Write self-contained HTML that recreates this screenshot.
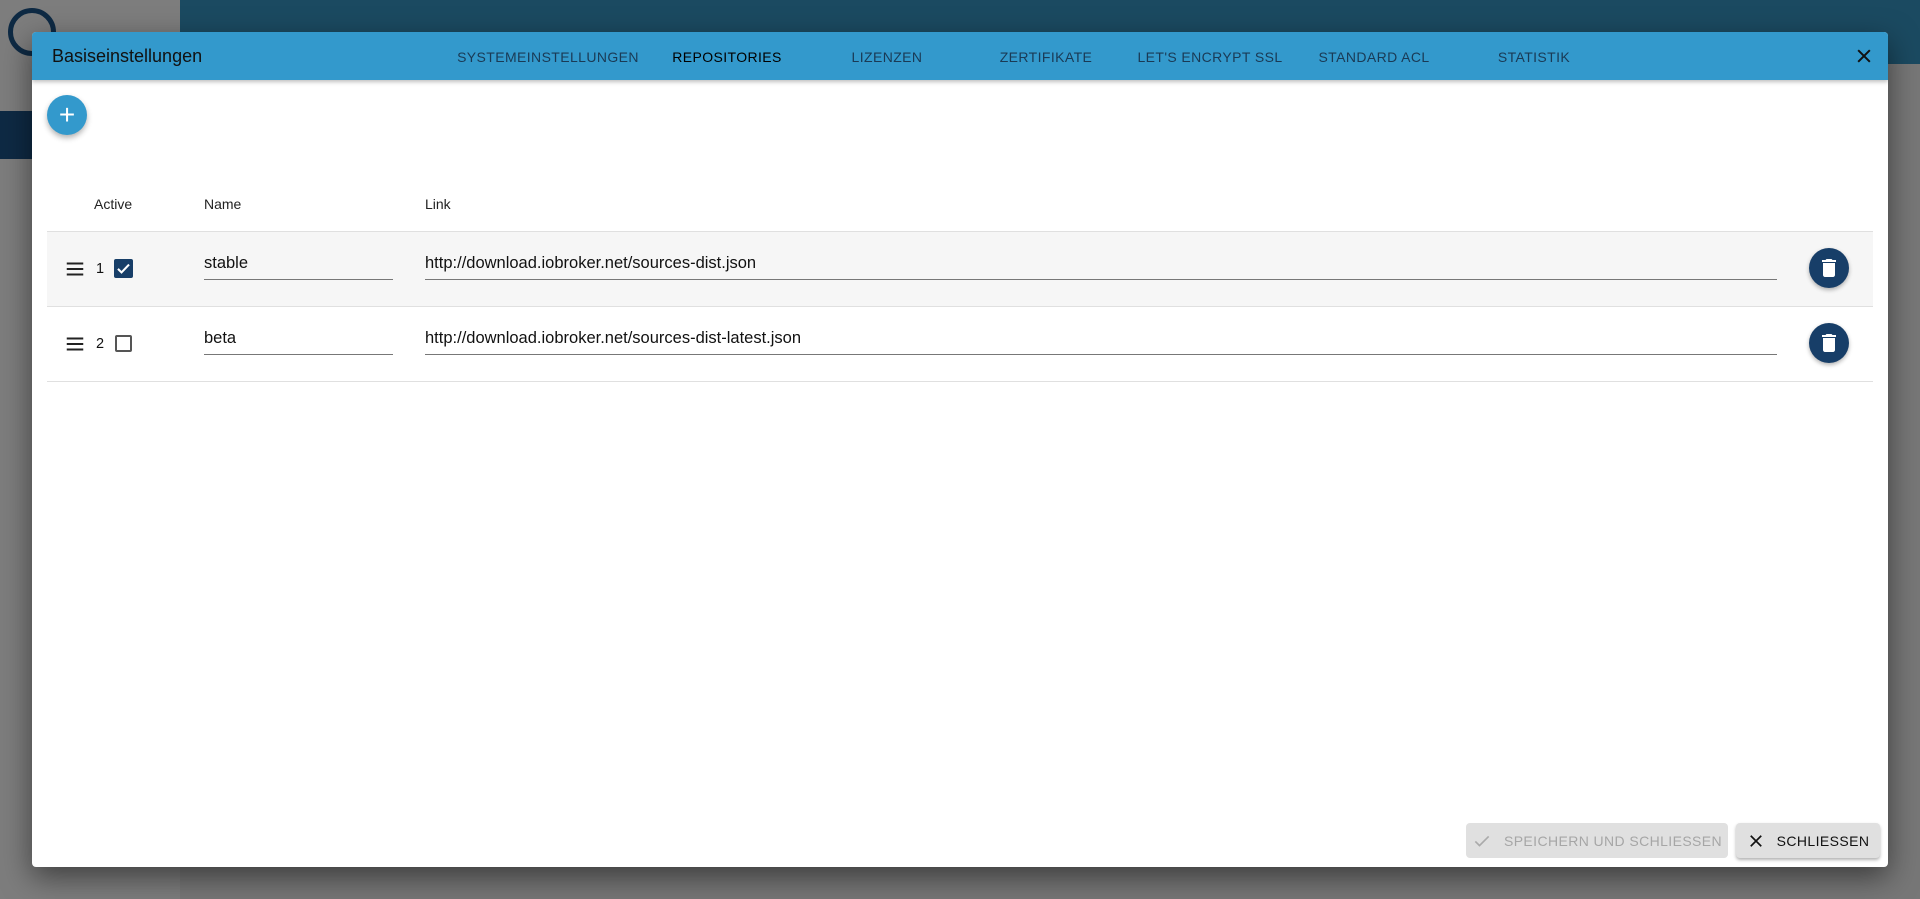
<!DOCTYPE html>
<html><head><meta charset="utf-8"><style>
*{box-sizing:border-box;margin:0;padding:0}
body{width:1920px;height:899px;overflow:hidden;background:#777;font-family:"Liberation Sans",sans-serif;position:relative}
.abs{position:absolute}
.topbar{left:180px;top:0;width:1740px;height:64px;background:#1b4a61}
.side{left:0;top:0;width:180px;height:899px;background:#7d7d7d}
.dlg{left:32px;top:32px;width:1856px;height:835px;background:#fff;border-radius:4px;box-shadow:0 10px 30px rgba(0,0,0,.5);overflow:hidden}
.hdr{left:0;top:0;width:1856px;height:48px;background:#3399cc;box-shadow:0 2px 4px rgba(0,0,0,.25)}
.title{left:20px;top:14px;font-size:18px;color:#111}
.tab{top:17px;font-size:14px;letter-spacing:.4px;color:#1a3a55;transform:translateX(-50%);white-space:nowrap}
.fab{left:15px;top:63px;width:40px;height:40px;border-radius:50%;background:#3399cc;box-shadow:0 3px 6px rgba(0,0,0,.3);color:#fff;font-size:28px;line-height:40px;text-align:center}
.lbl{font-size:14px;color:#222;top:164px}
.row{left:15px;width:1826px;height:75px;border-bottom:1px solid #e0e0e0}
.txt{font-size:16.5px;color:#111}
.ul{height:1px;background:#777}
.del{width:40px;height:40px;border-radius:50%;background:#173e68;box-shadow:0 2px 4px rgba(0,0,0,.3)}
.btn{height:35px;border-radius:4px;font-size:14px;letter-spacing:.4px;display:flex;align-items:center;justify-content:center;gap:12px}
</style></head><body>
<div class="abs side"></div>
<div class="abs" style="left:0;top:111px;width:40px;height:48px;background:#0e2a44"></div>
<div class="abs topbar"></div>
<div class="abs" style="left:8px;top:8px;width:48px;height:48px;border:5px solid #0e2a44;border-radius:50%"></div>
<div class="abs dlg">
 <div class="abs hdr">
  <div class="abs title">Basiseinstellungen</div>
  <div class="abs tab" style="left:516px">SYSTEMEINSTELLUNGEN</div>
  <div class="abs tab" style="left:695px;color:#000">REPOSITORIES</div>
  <div class="abs tab" style="left:855px">LIZENZEN</div>
  <div class="abs tab" style="left:1014px">ZERTIFIKATE</div>
  <div class="abs tab" style="left:1178px">LET'S ENCRYPT SSL</div>
  <div class="abs tab" style="left:1342px">STANDARD ACL</div>
  <div class="abs tab" style="left:1502px">STATISTIK</div>
  <svg class="abs" style="left:1822px;top:14px" width="20" height="20" viewBox="0 0 24 24"><path d="M5 5L19 19M19 5L5 19" stroke="#111" stroke-width="2.4"/></svg>
 </div>
 <div class="abs fab">+</div>
 <div class="abs lbl" style="left:62px">Active</div>
 <div class="abs lbl" style="left:172px">Name</div>
 <div class="abs lbl" style="left:393px">Link</div>
 <div class="abs" style="left:15px;top:199px;width:1826px;height:1px;background:#e0e0e0"></div>
 <div class="abs row" style="top:200px;background:#f6f6f6"></div>
 <div class="abs row" style="top:275px"></div>
 <!-- row1 -->
 <svg class="abs" style="left:32px;top:226px" width="22" height="22" viewBox="0 0 24 24"><path d="M3 6h18M3 12h18M3 18h18" stroke="#222" stroke-width="2.2"/></svg>
 <div class="abs txt" style="left:64px;top:229px;font-size:14.5px">1</div>
 <div class="abs" style="left:82px;top:227px;width:19px;height:19px;background:#173e68;border-radius:2px"><svg width="19" height="19" viewBox="0 0 24 24"><path d="M5 12.5l4.5 4.5L19 7" stroke="#fff" stroke-width="2.6" fill="none"/></svg></div>
 <div class="abs txt" style="left:172px;top:222px">stable</div>
 <div class="abs ul" style="left:172px;top:247px;width:189px"></div>
 <div class="abs txt" style="left:393px;top:222px">http://download.iobroker.net/sources-dist.json</div>
 <div class="abs ul" style="left:393px;top:247px;width:1352px"></div>
 <div class="abs del" style="left:1777px;top:216px"><svg width="40" height="40" viewBox="-8 -8 40 40"><path d="M6 19c0 1.1.9 2 2 2h8c1.100 0 2-.9 2-2V7H6v12zM19 4h-3.5l-1-1h-5l-1 1H5v2h14V4z" fill="#fff"/></svg></div>
 <!-- row2 -->
 <svg class="abs" style="left:32px;top:301px" width="22" height="22" viewBox="0 0 24 24"><path d="M3 6h18M3 12h18M3 18h18" stroke="#222" stroke-width="2.2"/></svg>
 <div class="abs txt" style="left:64px;top:304px;font-size:14.5px">2</div>
 <div class="abs" style="left:83px;top:303px;width:17px;height:17px;border:2px solid #555;border-radius:2px"></div>
 <div class="abs txt" style="left:172px;top:297px">beta</div>
 <div class="abs ul" style="left:172px;top:322px;width:189px"></div>
 <div class="abs txt" style="left:393px;top:297px">http://download.iobroker.net/sources-dist-latest.json</div>
 <div class="abs ul" style="left:393px;top:322px;width:1352px"></div>
 <div class="abs del" style="left:1777px;top:291px"><svg width="40" height="40" viewBox="-8 -8 40 40"><path d="M6 19c0 1.1.9 2 2 2h8c1.1 0 2-.9 2-2V7H6v12zM19 4h-3.5l-1-1h-5l-1 1H5v2h14V4z" fill="#fff"/></svg></div>
 <!-- buttons -->
 <div class="abs btn" style="left:1434px;top:791px;width:262px;background:#e0e0e0;color:#a6a6a6"><svg width="20" height="20" viewBox="0 0 24 24"><path d="M4 12.5l5 5L20 6.5" stroke="#aaa" stroke-width="2" fill="none"/></svg>SPEICHERN UND SCHLIESSEN</div>
 <div class="abs btn" style="left:1704px;top:791px;width:144px;background:#e0e0e0;color:#111;box-shadow:0 2px 3px rgba(0,0,0,.3)"><svg width="18" height="18" viewBox="0 0 24 24"><path d="M5 5L19 19M19 5L5 19" stroke="#111" stroke-width="2.2"/></svg>SCHLIESSEN</div>
</div>
</body></html>
